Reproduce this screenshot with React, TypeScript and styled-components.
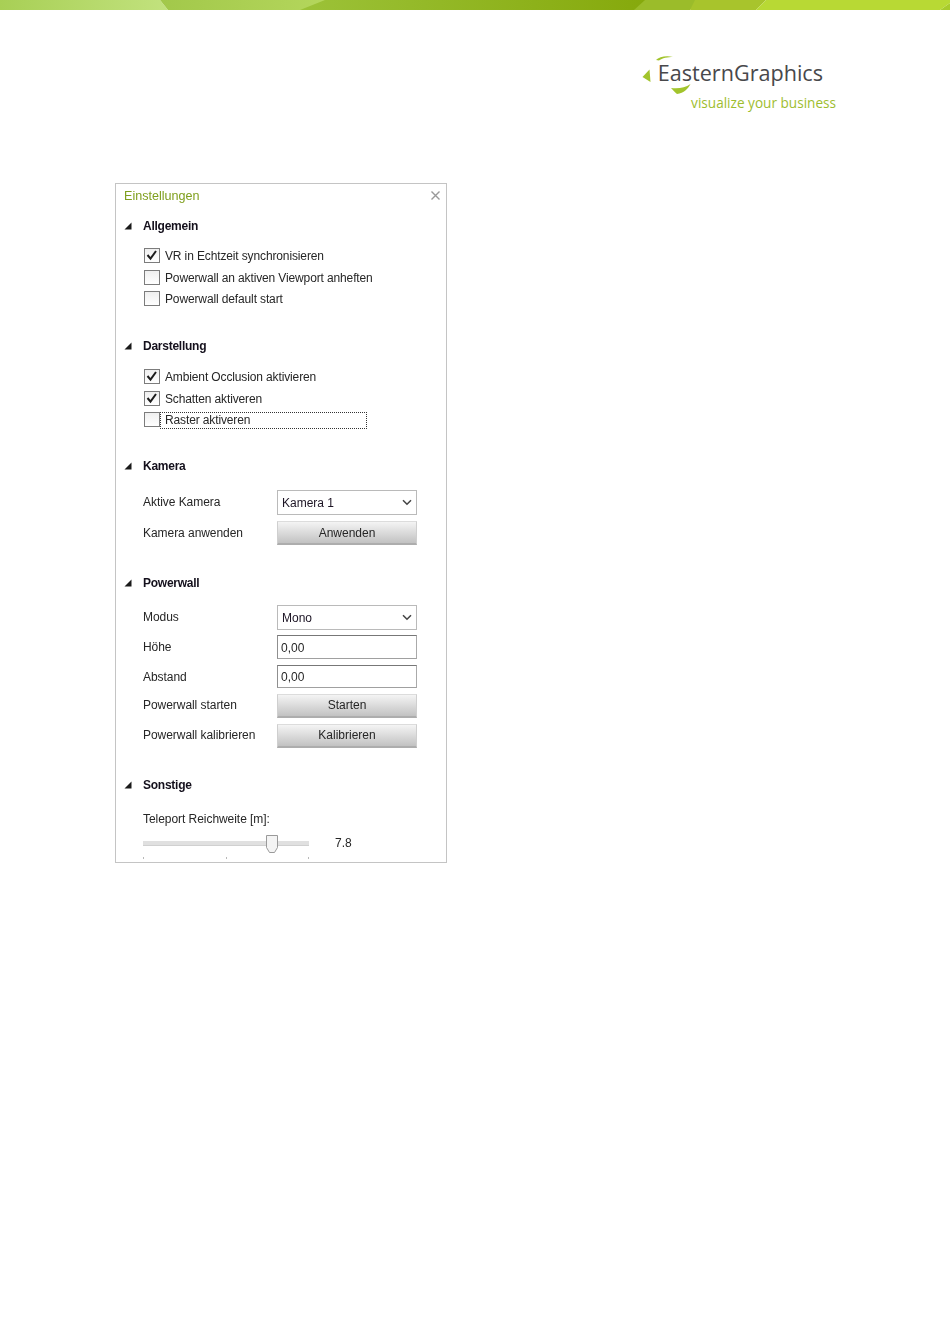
import React from "react";
import styled, { createGlobalStyle } from "styled-components";

const Global = createGlobalStyle`
  html, body { margin: 0; padding: 0; background: #fff; }
  body { font-family: "Liberation Sans", Arial, sans-serif; color: #262626; }
`;

const Page = styled.div`
  width: 950px;
  height: 1344px;
  overflow: hidden;
  background: #fff;
`;

const Band = styled.svg`
  display: block;
  width: 950px;
  height: 10px;
`;

const LogoRow = styled.header`
  height: 173px;
  display: flex;
  justify-content: flex-end;
  padding-right: 114px;
  box-sizing: border-box;
`;

const Logo = styled.div`
  width: 195px;
  height: 60px;
  margin-top: 45px;
  display: flex;
  flex-direction: column;
  align-items: flex-end;
  position: relative;
`;

const LogoMark = styled.svg`
  position: absolute;
  left: 0;
  top: 0;
`;

const LogoName = styled.div`
  font-family: "Open Sans", sans-serif;
  font-size: 21.6px;
  line-height: 28px;
  margin-top: 4px;
  margin-right: 13px;
  color: #48484b;
`;

const LogoTag = styled.div`
  font-family: "Open Sans", sans-serif;
  font-size: 13.6px;
  line-height: 16px;
  margin-top: 8px;
  color: #9ebd2e;
`;

const Panel = styled.section`
  width: 332px;
  height: 680px;
  box-sizing: border-box;
  margin-left: 115px;
  border: 1px solid #c4c4c4;
  font-size: 12px;
  filter: blur(0.3px);
`;

const TitleBar = styled.div`
  height: 22px;
  display: flex;
  align-items: center;
  justify-content: space-between;
  padding: 1px 6px 0 8px;
  box-sizing: border-box;
`;

const Title = styled.h2`
  margin: 0;
  font-size: 12.6px;
  font-weight: 400;
  color: #7f9f1d;
`;

const Close = styled.svg`
  display: block;
`;

const Section = styled.div<{ $top: number }>`
  margin-top: ${(p) => p.$top}px;
`;

const SectionHead = styled.div`
  height: 20px;
  display: flex;
  align-items: center;
  gap: 11px;
  padding-left: 8px;
  font-weight: 700;
  color: #14101c;
  letter-spacing: -0.25px;
`;

const Triangle = styled.svg`
  display: block;
  flex: none;
`;

const CheckList = styled.div<{ $top: number }>`
  margin-top: ${(p) => p.$top}px;
  padding-left: 28px;
`;

const CheckRow = styled.div<{ $h: number }>`
  height: ${(p) => p.$h}px;
  display: flex;
  align-items: center;
  gap: 5px;
`;

const Box = styled.span`
  width: 16px;
  height: 15px;
  margin-bottom: 2px;
  box-sizing: border-box;
  border: 1px solid #7c7c7c;
  background: linear-gradient(#efefef, #fff);
  display: flex;
  align-items: center;
  justify-content: center;
  flex: none;
`;

const CheckLabel = styled.span<{ $focus?: boolean }>`
  height: 15px;
  line-height: 15px;
  letter-spacing: -0.13px;
  box-sizing: border-box;
  ${(p) =>
    p.$focus
      ? `outline: 1px dotted #333; width: 205px; margin-left: -4px; padding-left: 4px;`
      : ""}
`;

const Form = styled.div<{ $top: number }>`
  margin-top: ${(p) => p.$top}px;
  padding-left: 27px;
  display: flex;
  flex-direction: column;
`;

const FormRow = styled.div<{ $after: number }>`
  display: grid;
  grid-template-columns: 134px 140px;
  align-items: center;
  margin-bottom: ${(p) => p.$after}px;
`;

const RowLabel = styled.span<{ $up: number }>`
  letter-spacing: -0.05px;
  padding-bottom: ${(p) => p.$up * 2}px;
`;

const Combo = styled.div`
  height: 25px;
  box-sizing: border-box;
  border: 1px solid #bababa;
  background: #fff;
  display: flex;
  align-items: center;
  justify-content: space-between;
  padding: 0 4px 0 4px;
  color: #1c1424;
`;

const Field = styled.div<{ $h: number; $drop: number }>`
  height: ${(p) => p.$h}px;
  box-sizing: border-box;
  border: 1px solid #8f8f8f;
  border-top-color: #777;
  border-bottom-color: #a0a0a0;
  border-right-color: #aaa;
  background: #fff;
  display: flex;
  align-items: center;
  padding: ${(p) => p.$drop}px 0 0 3px;
`;

const Btn = styled.div<{ $up?: boolean }>`
  height: 24px;
  box-sizing: border-box;
  background: linear-gradient(#f4f4f4, #c2c2c2);
  border: 1px solid #cfcfcf;
  border-top-color: #dcdcdc;
  border-bottom: 2px solid #adadad;
  display: flex;
  align-items: center;
  justify-content: center;
  padding-bottom: ${(p) => (p.$up ? 2 : 0)}px;
`;

const SliderLabel = styled.div`
  margin-top: 17px;
  padding-left: 27px;
  height: 14px;
  line-height: 14px;
  letter-spacing: -0.05px;
`;

const SliderRow = styled.div`
  margin-top: 9px;
  padding-left: 27px;
  display: flex;
  align-items: flex-start;
  gap: 26px;
`;

const Slider = styled.div`
  width: 166px;
  height: 24px;
  position: relative;
`;

const Track = styled.div`
  position: absolute;
  left: 0;
  right: 0;
  top: 6px;
  height: 5px;
  background: #e0e0e0;
  border-bottom: 1px solid #d0d0d0;
  box-sizing: border-box;
`;

const Thumb = styled.svg`
  position: absolute;
  left: 123px;
  top: 0;
`;

const Tick = styled.div<{ $at: number }>`
  position: absolute;
  top: 22px;
  left: ${(p) => p.$at}px;
  width: 1px;
  height: 2px;
  background: #b8b8b8;
`;

const SliderValue = styled.div`
  line-height: 16px;
`;

const Chev = () => (
  <svg width="10" height="7" viewBox="0 0 10 7">
    <path d="M1 1.2 5 5.3 9 1.2" fill="none" stroke="#444" strokeWidth="1.5" />
  </svg>
);

const Tri = () => (
  <Triangle width="8" height="8" viewBox="0 0 8 8">
    <path d="M7.5 0.5V7.5H0.5Z" fill="#1a1a1a" />
  </Triangle>
);

const Tick2 = () => (
  <svg width="12" height="11" viewBox="0 0 12 11">
    <path d="M1.500 5 4.500 8.700 10 1" fill="none" stroke="#1c1c1c" strokeWidth="2" />
  </svg>
);

const Check = ({
  label,
  on,
  h,
  focus,
}: {
  label: string;
  on?: boolean;
  h: number;
  focus?: boolean;
}) => (
  <CheckRow $h={h}>
    <Box>{on && <Tick2 />}</Box>
    <CheckLabel $focus={focus}>{label}</CheckLabel>
  </CheckRow>
);

const Row = ({
  label,
  up = 0,
  after = 6,
  children,
}: {
  label: string;
  up?: number;
  after?: number;
  children: React.ReactNode;
}) => (
  <FormRow $after={after}>
    <RowLabel $up={up}>{label}</RowLabel>
    {children}
  </FormRow>
);

export default function App() {
  return (
    <Page>
      <Global />
      <Band viewBox="0 0 950 10" preserveAspectRatio="none">
        <defs>
          <linearGradient id="g1" x1="0" x2="1" y1="0" y2="0">
            <stop offset="0" stopColor="#a8cf55" />
            <stop offset="1" stopColor="#c2e27e" />
          </linearGradient>
          <linearGradient id="g2" x1="0" x2="1" y1="0" y2="0">
            <stop offset="0" stopColor="#a2c84a" />
            <stop offset="1" stopColor="#b4d65c" />
          </linearGradient>
          <linearGradient id="g3" x1="0" x2="1" y1="0" y2="0">
            <stop offset="0" stopColor="#9cc238" />
            <stop offset="1" stopColor="#86a90c" />
          </linearGradient>
        </defs>
        <rect x="300" width="345" height="10" fill="url(#g3)" />
        <path d="M0 0H160L168 10H0Z" fill="url(#g1)" />
        <path d="M160 0H325L300 10H168Z" fill="url(#g2)" />
        <path d="M645 0H700L690 10H634Z" fill="#9bbc2a" />
        <path d="M695 0H766L756 10H690Z" fill="#a8c42c" />
        <path d="M766 0H950V3L940 10H756Z" fill="#b8d934" />
        <path d="M950 3V10H940Z" fill="#a8cb2c" />
      </Band>
      <LogoRow>
        <Logo>
          <LogoMark width="60" height="50" viewBox="0 0 60 50">
            <path d="M15 5C18 2 25 0 32 2 27 2 21 3 18 5.500Z" fill="#a2c42c" />
            <path d="M1.500 22 8.500 14.500 9.500 27Z" fill="#a2c42c" />
            <path d="M30 33C37 34 44 33 49.500 29 47 34 43 38 36 39 33.500 37 32 35 30 33Z" fill="#a2c42c" />
          </LogoMark>
          <LogoName>EasternGraphics</LogoName>
          <LogoTag>visualize your business</LogoTag>
        </Logo>
      </LogoRow>
      <Panel>
        <TitleBar>
          <Title>Einstellungen</Title>
          <Close width="9" height="9" viewBox="0 0 9 9">
            <path d="M.5.5 8.500 8.500M8.500.5.5 8.500" stroke="#999" strokeWidth="1.4" />
          </Close>
        </TitleBar>
        <Section $top={10}>
          <SectionHead>
            <Tri />
            Allgemein
          </SectionHead>
          <CheckList $top={10}>
            <Check label="VR in Echtzeit synchronisieren" on h={21} />
            <Check label="Powerwall an aktiven Viewport anheften" h={22} />
            <Check label="Powerwall default start" h={21} />
          </CheckList>
        </Section>
        <Section $top={26}>
          <SectionHead>
            <Tri />
            Darstellung
          </SectionHead>
          <CheckList $top={11}>
            <Check label="Ambient Occlusion aktivieren" on h={21} />
            <Check label="Schatten aktiveren" on h={22} />
            <Check label="Raster aktiveren" h={21} focus />
          </CheckList>
        </Section>
        <Section $top={25}>
          <SectionHead>
            <Tri />
            Kamera
          </SectionHead>
          <Form $top={14}>
            <Row label="Aktive Kamera" up={1}>
              <Combo>
                Kamera 1
                <Chev />
              </Combo>
            </Row>
            <Row label="Kamera anwenden" after={0}>
              <Btn>Anwenden</Btn>
            </Row>
          </Form>
        </Section>
        <Section $top={28}>
          <SectionHead>
            <Tri />
            Powerwall
          </SectionHead>
          <Form $top={12}>
            <Row label="Modus" up={1} after={5}>
              <Combo>
                Mono
                <Chev />
              </Combo>
            </Row>
            <Row label="Höhe" up={0}>
              <Field $h={24} $drop={2}>0,00</Field>
            </Row>
            <Row label="Abstand" up={0}>
              <Field $h={23} $drop={1}>0,00</Field>
            </Row>
            <Row label="Powerwall starten" up={1}>
              <Btn $up>Starten</Btn>
            </Row>
            <Row label="Powerwall kalibrieren" up={1} after={0}>
              <Btn $up>Kalibrieren</Btn>
            </Row>
          </Form>
        </Section>
        <Section $top={27}>
          <SectionHead>
            <Tri />
            Sonstige
          </SectionHead>
          <SliderLabel>Teleport Reichweite [m]:</SliderLabel>
          <SliderRow>
            <Slider>
              <Track />
              <Thumb width="12" height="19" viewBox="0 0 12 19">
                <path
                  d="M.5.5H11.500V12.500L8.500 17.500H3.500L.5 12.500Z"
                  fill="#f4f4f4"
                  stroke="#9a9a9a"
                />
              </Thumb>
              <Tick $at={0} />
              <Tick $at={83} />
              <Tick $at={165} />
            </Slider>
            <SliderValue>7.8</SliderValue>
          </SliderRow>
        </Section>
      </Panel>
    </Page>
  );
}
